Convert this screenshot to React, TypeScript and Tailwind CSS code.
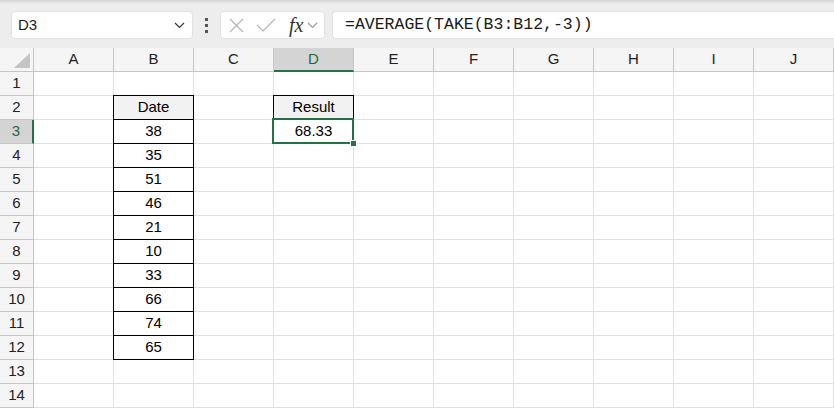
import React from "react";

const cols = ["A", "B", "C", "D", "E", "F", "G", "H", "I", "J"];
const rows = Array.from({ length: 14 }, (_, i) => i + 1);
const values = [38, 35, 51, 46, 21, 10, 33, 66, 74, 65];

type Cell = { text?: string; boxed?: boolean; fill?: boolean; selected?: boolean };

function getCell(r: number, c: string): Cell {
  if (c === "B" && r === 2) return { text: "Date", boxed: true, fill: true };
  if (c === "B" && r >= 3 && r <= 12) return { text: String(values[r - 3]), boxed: true };
  if (c === "D" && r === 2) return { text: "Result", boxed: true, fill: true };
  if (c === "D" && r === 3) return { text: "68.33", selected: true };
  return {};
}

function Chevron({ color = "#444" }: { color?: string }) {
  return (
    <svg width="11" height="7" viewBox="0 0 11 7" fill="none">
      <path d="M1 1l4.5 4.5L10 1" stroke={color} strokeWidth="1.2" />
    </svg>
  );
}

function FormulaBar() {
  return (
    <div className="h-[48px] bg-[#ededed] relative">
      <div className="h-[4px] bg-linear-to-b from-[#d2d2d2] to-[#ededed]" />
      <div className="flex items-start pl-[11px] pt-[7px]">
        <div className="w-[182px] h-[28px] bg-white rounded-[4px] border border-[#e2e2e2] flex items-center justify-between pl-[6px] pr-[7px]">
          <span className="text-[15px] text-[#1a1a1a]">D3</span>
          <Chevron color="#333" />
        </div>
        <div className="w-[27px] h-[28px] flex flex-col items-center justify-center gap-[3px]">
          <div className="w-[3px] h-[3px] bg-[#555]" />
          <div className="w-[3px] h-[3px] bg-[#555]" />
          <div className="w-[3px] h-[3px] bg-[#555]" />
        </div>
        <div className="w-[105px] h-[28px] bg-white rounded-[4px] border border-[#e2e2e2] flex items-center pl-[7px]">
          <svg width="17" height="17" viewBox="0 0 17 17" fill="none">
            <path d="M2 2l13 13M15 2L2 15" stroke="#b5b5b5" strokeWidth="1.2" />
          </svg>
          <svg width="20" height="16" viewBox="0 0 20 16" fill="none" className="ml-[11px]">
            <path d="M1 8l6 6L19 2" stroke="#b5b5b5" strokeWidth="1.2" />
          </svg>
          <span className="ml-[13px] text-[20px] italic text-[#333] leading-none" style={{ fontFamily: '"Liberation Serif", serif' }}>
            fx
          </span>
          <div className="ml-[4px]">
            <Chevron color="#999" />
          </div>
        </div>
        <div className="flex-1 ml-[7px] h-[28px] bg-white rounded-l-[4px] border border-r-0 border-[#e2e2e2] flex items-center pl-[12px]">
          <span className="text-[16.5px] text-[#1a1a1a]" style={{ fontFamily: '"Liberation Mono", monospace' }}>
            =AVERAGE(TAKE(B3:B12,-3))
          </span>
        </div>
      </div>
    </div>
  );
}

export default function App() {
  return (
    <div className="w-[834px] h-[408px] overflow-hidden bg-white" style={{ fontFamily: '"Liberation Sans", Arial, sans-serif' }}>
      <FormulaBar />
      <div className="grid grid-cols-[34px_repeat(10,80px)] auto-rows-[24px]">
        <div className="relative bg-[#f5f5f5] border-r border-b border-[#c6c6c6]">
          <svg width="16" height="15" viewBox="0 0 16 15" className="absolute right-[3px] bottom-[3px]">
            <path d="M16 0V15H0Z" fill="#c4c4c4" />
          </svg>
        </div>
        {cols.map((c) =>
          c === "D" ? (
            <div key={c} className="bg-[#d4d4d4] border-r border-[#c6c6c6] border-b-2 border-b-[#217346] flex items-center justify-center text-[15px] text-[#1e6b41]">
              {c}
            </div>
          ) : (
            <div key={c} className="bg-[#f5f5f5] border-r border-b border-[#c6c6c6] flex items-center justify-center text-[15px] text-[#222]">
              {c}
            </div>
          )
        )}
        {rows.map((r) => (
          <React.Fragment key={r}>
            {r === 3 ? (
              <div className="bg-[#d4d4d4] border-b border-[#c6c6c6] border-r-2 border-r-[#217346] flex items-center justify-center text-[15px] text-[#1e6b41]">
                {r}
              </div>
            ) : (
              <div className="bg-[#f5f5f5] border-r border-b border-[#c6c6c6] flex items-center justify-center text-[15px] text-[#222]">
                {r}
              </div>
            )}
            {cols.map((c) => {
              const cell = getCell(r, c);
              return (
                <div
                  key={c}
                  className={`relative border-r border-b border-[#e1e1e1] flex items-center justify-center text-[15px] text-black ${cell.fill ? "bg-[#f2f2f2]" : "bg-white"}`}
                >
                  {cell.text}
                  {cell.boxed && <div className="absolute -left-px -top-px right-[-1px] bottom-[-1px] border border-black z-10" />}
                  {cell.selected && (
                    <>
                      <div className="absolute -left-[2px] -top-[2px] -right-px -bottom-px border-2 border-[#217346] z-10" />
                      <div className="absolute -right-[4px] -bottom-[4px] w-[7px] h-[7px] bg-[#217346] border border-white z-20" />
                    </>
                  )}
                </div>
              );
            })}
          </React.Fragment>
        ))}
      </div>
    </div>
  );
}
